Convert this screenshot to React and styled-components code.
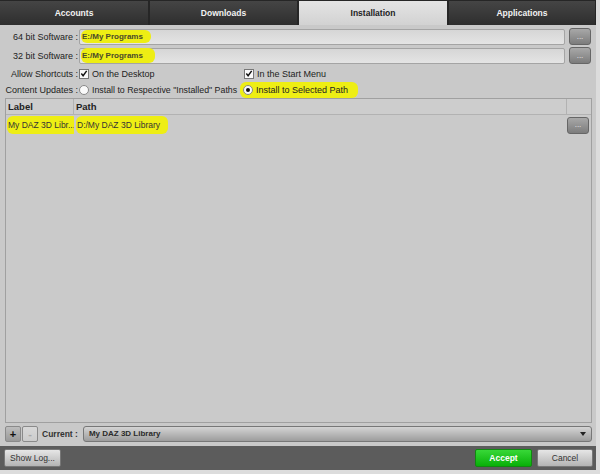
import React from 'react';
import styled, {createGlobalStyle, css} from 'styled-components';

const Global = createGlobalStyle`
  html, body { margin: 0; padding: 0; background: #dcdcdc; }
  body { font-family: "Liberation Sans", Arial, sans-serif; }
  * { box-sizing: border-box; }
`;

const Window = styled.div`
  width: 596px;
  height: 470px;
  background: #c9c9c9;
  display: flex;
  flex-direction: column;
  overflow: hidden;
`;

const TabBar = styled.div`
  height: 25px;
  flex: none;
  background: #262626;
  display: grid;
  grid-template-columns: 148px 147px 148px 146px;
  column-gap: 2px;
  padding-top: 1px;
`;

const Tab = styled.div`
  display: flex;
  align-items: center;
  justify-content: center;
  font-size: 8.5px;
  font-weight: bold;
  color: #f2f2f2;
  background: linear-gradient(#454545, #2e2e2e);
  ${p => p.$active && css`
    background: linear-gradient(#e4e4e4, #d2d2d2);
    color: #222;
  `}
`;

const Form = styled.div`
  padding: 2px 5px 0 4px;
  display: flex;
  flex-direction: column;
`;

const Row = styled.div`
  display: flex;
  align-items: center;
  height: ${p => p.$h || 19}px;
`;

const Label = styled.div`
  width: 74px;
  text-align: right;
  font-size: 9px;
  color: #222;
  margin-right: 1px;
  white-space: nowrap;
`;

const Field = styled.div`
  flex: 1;
  height: 16px;
  border: 1px solid #a4a4a4;
  border-radius: 2px;
  background: linear-gradient(#d6d6d6, #e4e4e4);
  display: flex;
  align-items: center;
  font-size: 8px;
  font-weight: bold;
  color: #4a4a2a;
  padding-left: 1px;
`;

const Highlight = styled.span`
  background: #eeee14;
  border-radius: 6px;
  padding: ${p => p.$pad || '2px 8px 2px 1px'};
`;

const BrowseBtn = styled.div`
  width: 22px;
  height: 17px;
  margin-left: 4px;
  border: 1px solid #666;
  border-radius: 3px;
  background: linear-gradient(#a8a8a8, #7c7c7c);
  color: #eee;
  font-size: 8px;
  display: flex;
  align-items: center;
  justify-content: center;
  line-height: 1;
`;

const Option = styled.div`
  display: flex;
  align-items: center;
  gap: 3px;
  font-size: ${p => p.$fs || 9}px;
  color: #222;
  width: ${p => p.$w ? `${p.$w}px` : 'auto'};
  white-space: nowrap;
`;

const Box = styled.div`
  width: 10px;
  height: 10px;
  background: #fafafa;
  border: 1px solid #777;
  display: flex;
  align-items: center;
  justify-content: center;
`;

const Radio = styled.div`
  width: 10px;
  height: 10px;
  flex: none;
  border-radius: 50%;
  background: #fafafa;
  border: 1px solid #888;
  display: flex;
  align-items: center;
  justify-content: center;
  &::after {
    content: '';
    display: ${p => p.$on ? 'block' : 'none'};
    width: 4px;
    height: 4px;
    border-radius: 50%;
    background: #111;
  }
`;

const SelectedOption = styled(Highlight)`
  display: flex;
  align-items: center;
  gap: 3px;
`;

const Table = styled.div`
  flex: 1;
  margin: 1px 4px 0 5px;
  border: 1px solid #a0a0a0;
  background: #cacaca;
  display: flex;
  flex-direction: column;
`;

const TRow = styled.div`
  display: grid;
  grid-template-columns: 68px 1fr 24px;
  height: ${p => p.$h}px;
  align-items: center;
  ${p => p.$head && css`
    border-bottom: 1px solid #b2b2b2;
    background: #cdcdcd;
  `}
`;

const Cell = styled.div`
  height: 100%;
  display: flex;
  align-items: center;
  padding-left: ${p => p.$pl ?? 2}px;
  font-size: 8.5px;
  color: #333;
  white-space: nowrap;
  overflow: hidden;
  ${p => p.$sep && css`border-right: 1px solid #b2b2b2;`}
  ${p => p.$bold && css`font-size: 9.5px; font-weight: bold; color: #222;`}
`;

const RowBrowse = styled(BrowseBtn)`
  margin-left: 0;
`;

const Bottom = styled.div`
  display: flex;
  align-items: center;
  height: 17px;
  margin: 2px 4px 4px 5px;
`;

const SmallBtn = styled.div`
  width: 16px;
  height: 16px;
  border: 1px solid #8a8a8a;
  border-radius: 2px;
  background: ${p => p.$dim ? 'linear-gradient(#d8d8d8, #cccccc)' : 'linear-gradient(#bdbdbd, #999)'};
  color: ${p => p.$dim ? '#aaa' : '#111'};
  font-size: 11px;
  font-weight: bold;
  display: flex;
  align-items: center;
  justify-content: center;
  margin-right: 1px;
`;

const CurrentLabel = styled.div`
  font-size: 8.5px;
  font-weight: bold;
  color: #333;
  margin: 0 5px 0 3px;
`;

const Select = styled.div`
  flex: 1;
  height: 16px;
  border: 1px solid #777;
  border-radius: 3px;
  background: linear-gradient(#d4d4d4, #9c9c9c);
  display: flex;
  align-items: center;
  justify-content: space-between;
  padding: 0 5px 0 5px;
  font-size: 8px;
  font-weight: bold;
  color: #2a2a2a;
`;

const Footer = styled.div`
  height: 24px;
  background: #5c5c5c;
  display: flex;
  align-items: center;
  padding: 0 3px 0 4px;
  gap: 5px;
`;

const FootBtn = styled.div`
  height: 18px;
  width: ${p => p.$w}px;
  border-radius: 2px;
  display: flex;
  align-items: center;
  justify-content: center;
  font-size: 8.5px;
  color: #333;
  border: 1px solid #777;
  background: linear-gradient(#e6e6e6, #b4b4b4);
  ${p => p.$green && css`
    background: linear-gradient(#38d838, #08b008);
    border-color: #118811;
    color: #fff;
    font-weight: bold;
  `}
`;

const Spacer = styled.div`flex: 1;`;

const Check = () => (
  <Box>
    <svg width="9" height="9" viewBox="0 0 9 9">
      <path d="M1.5 4.5 L3.5 7 L7.5 1.5" fill="none" stroke="#111" strokeWidth="1.6"/>
    </svg>
  </Box>
);

const Arrow = () => (
  <svg width="6" height="4" viewBox="0 0 6 4"><path d="M0 0 H6 L3 4 Z" fill="#222"/></svg>
);

export default function App() {
  return (
    <Window>
      <Global/>
      <TabBar>
        <Tab>Accounts</Tab>
        <Tab>Downloads</Tab>
        <Tab $active>Installation</Tab>
        <Tab>Applications</Tab>
      </TabBar>
      <Form>
        <Row $h={19}>
          <Label>64 bit Software :</Label>
          <Field><Highlight>E:/My Programs</Highlight></Field>
          <BrowseBtn>...</BrowseBtn>
        </Row>
        <Row $h={19}>
          <Label>32 bit Software :</Label>
          <Field><Highlight $pad="3px 12px 3px 1px">E:/My Programs</Highlight></Field>
          <BrowseBtn>...</BrowseBtn>
        </Row>
        <Row $h={17}>
          <Label>Allow Shortcuts :</Label>
          <Option $w={165}><Check/>On the Desktop</Option>
          <Option><Check/>In the Start Menu</Option>
        </Row>
        <Row $h={15}>
          <Label>Content Updates :</Label>
          <Option $w={161} $fs={8.8}><Radio/>Install to Respective "Installed" Paths</Option>
          <Option>
            <SelectedOption $pad="3px 10px 3px 3px">
              <Radio $on/>Install to Selected Path
            </SelectedOption>
          </Option>
        </Row>
      </Form>
      <Table>
        <TRow $h={16} $head>
          <Cell $sep $bold>Label</Cell>
          <Cell $sep $bold>Path</Cell>
          <Cell/>
        </TRow>
        <TRow $h={20}>
          <Cell $pl={1}><Highlight $pad="4px 3px 4px 1px">My DAZ 3D Libr...</Highlight></Cell>
          <Cell><Highlight $pad="4px 8px 4px 1px">D:/My DAZ 3D Library</Highlight></Cell>
          <Cell $pl={0}><RowBrowse>...</RowBrowse></Cell>
        </TRow>
      </Table>
      <Bottom>
        <SmallBtn>+</SmallBtn>
        <SmallBtn $dim>-</SmallBtn>
        <CurrentLabel>Current :</CurrentLabel>
        <Select>My DAZ 3D Library<Arrow/></Select>
      </Bottom>
      <Footer>
        <FootBtn $w={57}>Show Log...</FootBtn>
        <Spacer/>
        <FootBtn $w={57} $green>Accept</FootBtn>
        <FootBtn $w={56}>Cancel</FootBtn>
      </Footer>
    </Window>
  );
}
